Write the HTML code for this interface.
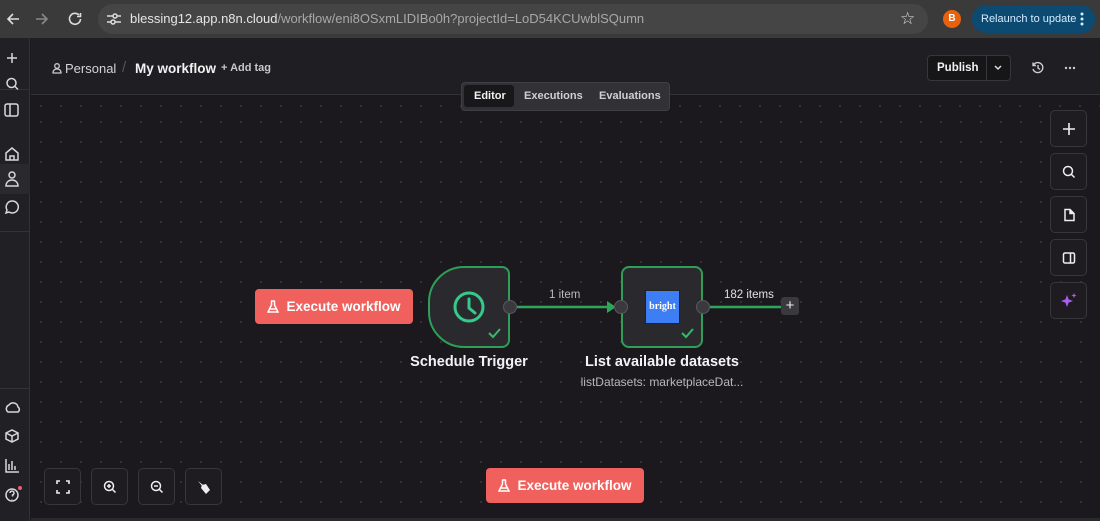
<!DOCTYPE html>
<html><head><style>
*{box-sizing:border-box;margin:0;padding:0}
body{width:1100px;height:521px;overflow:hidden;background:#1b191d;font-family:"Liberation Sans",sans-serif;position:relative;color:#e8e8e8}
.abs{position:absolute}
.chrome{left:0;top:0;width:1100px;height:38px;background:#3a3a3b}
.pill{left:98px;top:4px;width:830px;height:30px;border-radius:15px;background:#454546}
.url{left:130px;top:11px;font-size:13px;color:#e6e6e6}
.url span{color:#a8a8a8}
.relaunch{left:972px;top:5px;width:123px;height:28px;border-radius:14px;background:#0c4a72;color:#d6ecff;font-size:11px;line-height:14px;padding:7px 0 0 9px;white-space:nowrap}
.side{left:0;top:38px;width:30px;height:483px;background:#212024;border-right:1px solid #333}
.header{left:31px;top:38px;width:1069px;height:57px;background:#1f1e22;border-bottom:1px solid #333}
.canvas{left:31px;top:96px;width:1069px;height:422px;background-color:#1b191d;background-image:radial-gradient(#35333a 1px,transparent 1.2px);background-size:20px 20px}
.btn{background:#f0605c;color:#fff;border-radius:4px;font-size:13.5px;font-weight:bold;display:flex;align-items:center;justify-content:center;gap:7px}
.node{border:2px solid #2f9e57;background:#2a292d;border-radius:8px}
.ctrl{width:37px;height:37px;border:1px solid #38363b;border-radius:5px;background:#1e1c20;display:flex;align-items:center;justify-content:center}
.dot{width:14px;height:14px;border-radius:50%;background:#3a393e;border:1.5px solid #5a585f}
.lbl{font-size:14.5px;font-weight:bold;color:#f3f3f3;text-align:center}
svg{display:block}
</style></head><body>
<div class="abs chrome"></div>
<svg class="abs" style="left:6px;top:11px" width="80" height="16" viewBox="0 0 80 16" fill="none" stroke-width="1.6"><path d="M13 8H2M7 3L2 8l5 5" stroke="#ddd"/><path d="M30 8h11M36 3l5 5-5 5" stroke="#888"/><path d="M73 4a5.5 5.5 0 1 0 1.5 4M74.5 2v3.5H71" stroke="#ddd"/></svg>
<div class="abs pill"></div>
<svg class="abs" style="left:106px;top:12px" width="16" height="14" viewBox="0 0 16 14" stroke="#ddd" stroke-width="1.5" fill="none"><path d="M1 4h6M11 4h4M1 10h4M9 10h6"/><circle cx="9" cy="4" r="2"/><circle cx="7" cy="10" r="2"/></svg>
<div class="abs url">blessing12.app.n8n.cloud<span>/workflow/eni8OSxmLIDIBo0h?projectId=LoD54KCUwblSQumn</span></div>
<div class="abs" style="left:900px;top:9px;font-size:17px;color:#ddd">☆</div>
<div class="abs" style="left:943px;top:10px;width:18px;height:18px;border-radius:50%;background:#e8610f;color:#fff;font-size:10px;text-align:center;line-height:18px;font-weight:bold">B</div>
<div class="abs relaunch">Relaunch to update</div>
<svg class="abs" style="left:1080px;top:12px" width="4" height="14" viewBox="0 0 4 14" fill="#d6ecff"><circle cx="2" cy="2" r="1.5"/><circle cx="2" cy="7" r="1.5"/><circle cx="2" cy="12" r="1.5"/></svg>

<div class="abs side"></div>
<div class="abs" style="left:0;top:89px;width:30px;height:1px;background:#333"></div>
<div class="abs" style="left:0;top:164px;width:30px;height:30px;background:#2a292d"></div>
<div class="abs" style="left:0;top:231px;width:30px;height:1px;background:#333"></div>
<div class="abs" style="left:0;top:388px;width:30px;height:1px;background:#333"></div>
<svg class="abs" style="left:2px;top:50px" width="22" height="170" viewBox="0 0 22 170" fill="none" stroke="#d8d8d8" stroke-width="1.5">
<path d="M10 3v10M5 8h10"/>
<circle cx="9.5" cy="33" r="4.5"/><path d="M13 36.5l3 3"/>
<rect x="3" y="54" width="13" height="12" rx="2"/><path d="M8 54v12"/>
<path d="M4 103l6-5 6 5v7H4z M8 110v-4h4v4"/>
<circle cx="10" cy="125" r="3"/><path d="M4 136c0-4 3-6 6-6s6 2 6 6z"/>
<path d="M10 151a6 6 0 1 1-3 11l-3 1 1-3a6 6 0 0 1 5-9z"/>
</svg>
<svg class="abs" style="left:2px;top:398px" width="22" height="110" viewBox="0 0 22 110" fill="none" stroke="#d8d8d8" stroke-width="1.5">
<path d="M6 14a4 4 0 0 1 1-7 5 5 0 0 1 9 2 3 3 0 0 1 0 5z"/>
<path d="M4 35l6-3 6 3v6l-6 3-6-3z M4 35l6 3 6-3M10 38v6"/>
<path d="M4 61v13h13M7 72v-6M10 72v-9M13 72v-4"/>
<circle cx="10" cy="97" r="6"/><path d="M8 95a2 2 0 1 1 2.5 2v1.5M10 101v.5"/>
</svg>
<div class="abs" style="left:18px;top:486px;width:4px;height:4px;border-radius:50%;background:#f25a78"></div>

<div class="abs header"></div>
<svg class="abs" style="left:52px;top:63px" width="10" height="11" viewBox="0 0 10 11" fill="none" stroke="#ccc" stroke-width="1.3"><circle cx="5" cy="3" r="2.3"/><path d="M1 10c0-3 2-4 4-4s4 1 4 4z"/></svg>
<div class="abs" style="left:65px;top:61px;font-size:13px;color:#d4d4d4">Personal</div>
<div class="abs" style="left:122px;top:59px;font-size:15px;color:#555">/</div>
<div class="abs" style="left:135px;top:61px;font-size:13.5px;font-weight:bold;color:#f2f2f2">My workflow</div>
<div class="abs" style="left:221px;top:62px;font-size:11px;color:#c8c8c8;font-weight:bold">+ Add tag</div>
<div class="abs" style="left:927px;top:55px;width:84px;height:26px;border:1px solid #38363b;border-radius:4px;background:#161518"></div>
<div class="abs" style="left:986px;top:55px;width:1px;height:26px;background:#38363b"></div>
<div class="abs" style="left:937px;top:62px;font-size:11.5px;line-height:13px;font-weight:bold;color:#f2f2f2">Publish</div>
<svg class="abs" style="left:993px;top:64px" width="10" height="8" viewBox="0 0 10 8" fill="none" stroke="#ddd" stroke-width="1.5"><path d="M2 2l3 3 3-3"/></svg>
<svg class="abs" style="left:1031px;top:61px" width="14" height="14" viewBox="0 0 14 14" fill="none" stroke="#ccc" stroke-width="1.4"><path d="M2.5 4A5 5 0 1 1 2 8M2 1.5V4.5h3M7 4v3l2 1.5"/></svg>
<svg class="abs" style="left:1064px;top:66px" width="12" height="4" viewBox="0 0 12 4" fill="#ccc"><circle cx="2" cy="2" r="1.2"/><circle cx="6" cy="2" r="1.2"/><circle cx="10" cy="2" r="1.2"/></svg>
<div class="abs" style="left:461px;top:82px;width:209px;height:29px;background:#323136;border-radius:4px;border:1px solid #403f44"></div>
<div class="abs" style="left:464px;top:85px;width:50px;height:22px;background:#18171a;border-radius:3px"></div>
<div class="abs" style="left:474px;top:90px;font-size:11px;font-weight:bold;color:#f2f2f2">Editor</div>
<div class="abs" style="left:524px;top:90px;font-size:11px;font-weight:bold;color:#cfcfcf">Executions</div>
<div class="abs" style="left:599px;top:90px;font-size:11px;font-weight:bold;color:#cfcfcf">Evaluations</div>

<div class="abs canvas" style="top:112px;height:406px"></div>
<div class="abs canvas" style="top:96px;height:16px;left:31px;width:430px"></div>
<div class="abs canvas" style="top:96px;height:16px;left:670px;width:430px"></div>

<div class="abs btn" style="left:255px;top:289px;width:158px;height:35px"><svg width="12" height="14" viewBox="0 0 12 14" fill="none" stroke="#fff" stroke-width="1.5"><path d="M4 1h4M4.5 1v4L1 12h10L7.5 5V1M2.5 9h7"/></svg>Execute workflow</div>
<div class="abs btn" style="left:486px;top:468px;width:158px;height:35px"><svg width="12" height="14" viewBox="0 0 12 14" fill="none" stroke="#fff" stroke-width="1.5"><path d="M4 1h4M4.5 1v4L1 12h10L7.5 5V1M2.5 9h7"/></svg>Execute workflow</div>

<div class="abs node" style="left:428px;top:266px;width:82px;height:82px;border-radius:36px 8px 8px 36px"></div>
<svg class="abs" style="left:451px;top:289px" width="36" height="36" viewBox="0 0 36 36" fill="none" stroke="#35c98a" stroke-width="3"><circle cx="18" cy="18" r="14"/><path d="M18 10v9l6 5" stroke-linecap="round"/></svg>
<div class="abs node" style="left:621px;top:266px;width:82px;height:82px"></div>
<div class="abs" style="left:645px;top:290px;width:35px;height:34px;background:#3d7ef5;border:1px solid #222;color:#fff;font-family:'Liberation Serif',serif;font-weight:bold;font-size:10px;text-align:center;line-height:32px">bright</div>
<svg class="abs" style="left:486px;top:326px" width="220" height="14" viewBox="0 0 220 14" fill="none" stroke="#35b96b" stroke-width="2"><path d="M3 7l4 4 7-8M196 7l4 4 7-8"/></svg>
<svg class="abs" style="left:500px;top:295px" width="300" height="24" viewBox="0 0 300 24" fill="none"><path d="M17 12H112" stroke="#2ea65a" stroke-width="2.5"/><path d="M107 6l9 6-9 6z" fill="#2ea65a"/><path d="M210 12H283" stroke="#2ea65a" stroke-width="2.5"/></svg>
<div class="abs dot" style="left:503px;top:300px"></div>
<div class="abs dot" style="left:614px;top:300px"></div>
<div class="abs dot" style="left:696px;top:300px"></div>
<div class="abs" style="left:781px;top:297px;width:18px;height:18px;border-radius:3px;background:#3a393e;color:#eee;font-size:15px;text-align:center;line-height:17px">+</div>
<div class="abs" style="left:549px;top:289px;font-size:11.5px;color:#bbb">1 item</div>
<div class="abs" style="left:724px;top:289px;font-size:11.5px;color:#e0e0e0">182 items</div>
<div class="abs lbl" style="left:389px;top:354px;width:160px">Schedule Trigger</div>
<div class="abs lbl" style="left:572px;top:354px;width:180px">List available datasets</div>
<div class="abs" style="left:555px;top:375px;width:214px;text-align:center;font-size:12px;color:#b8b8b8">listDatasets: marketplaceDat...</div>

<div class="abs ctrl" style="left:1050px;top:110px"><svg width="14" height="14" viewBox="0 0 14 14" stroke="#eee" stroke-width="1.6"><path d="M7 1v12M1 7h12"/></svg></div>
<div class="abs ctrl" style="left:1050px;top:153px"><svg width="14" height="14" viewBox="0 0 14 14" fill="none" stroke="#eee" stroke-width="1.5"><circle cx="6" cy="6" r="4.5"/><path d="M9.5 9.5l3 3"/></svg></div>
<div class="abs ctrl" style="left:1050px;top:196px"><svg width="14" height="14" viewBox="0 0 14 14" fill="none" stroke="#eee" stroke-width="1.5"><path d="M3 1.5h5l4 4v7H3z"/><path d="M8 1.5v4h4" fill="#eee"/></svg></div>
<div class="abs ctrl" style="left:1050px;top:239px"><svg width="14" height="14" viewBox="0 0 14 14" fill="none" stroke="#eee" stroke-width="1.5"><rect x="1.5" y="2" width="11" height="10" rx="1.5"/><path d="M8.5 2v10"/></svg></div>
<div class="abs ctrl" style="left:1050px;top:282px"><svg width="18" height="18" viewBox="0 0 18 18" fill="#a960f0"><path d="M7 3l1.6 4.4L13 9l-4.4 1.6L7 15l-1.6-4.4L1 9l4.4-1.6z"/><path d="M14 1l.7 1.8L16.5 3.5l-1.8.7L14 6l-.7-1.8L11.5 3.5l1.8-.7z"/></svg></div>

<div class="abs ctrl" style="left:44px;top:468px"><svg width="14" height="14" viewBox="0 0 14 14" fill="none" stroke="#eee" stroke-width="1.6"><path d="M1 4V1h3M10 1h3v3M13 10v3h-3M4 13H1v-3"/></svg></div>
<div class="abs ctrl" style="left:91px;top:468px"><svg width="14" height="14" viewBox="0 0 14 14" fill="none" stroke="#eee" stroke-width="1.5"><circle cx="6" cy="6" r="4.5"/><path d="M9.5 9.5l3 3M4 6h4M6 4v4"/></svg></div>
<div class="abs ctrl" style="left:138px;top:468px"><svg width="14" height="14" viewBox="0 0 14 14" fill="none" stroke="#eee" stroke-width="1.5"><circle cx="6" cy="6" r="4.5"/><path d="M9.5 9.5l3 3M4 6h4"/></svg></div>
<div class="abs ctrl" style="left:185px;top:468px"><svg width="16" height="16" viewBox="0 0 16 16" fill="#eee"><path d="M2 2l5 4-1 1z"/><path d="M6 6l4-1 4 6-4 4-5-6z"/></svg></div>
<div class="abs" style="left:31px;top:518px;width:1069px;height:3px;background:#2a292d"></div>
</body></html>
